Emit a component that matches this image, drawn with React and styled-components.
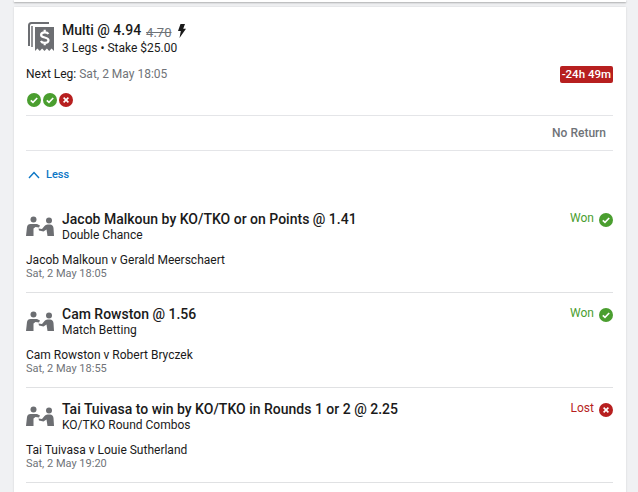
import React from 'react'
import styled, { createGlobalStyle } from 'styled-components'

const Global = createGlobalStyle`
  html, body { margin: 0; padding: 0; background: #f0f1f3; }
  body { font-family: Roboto, "Liberation Sans", sans-serif; color: #1a1a1a; }
`

const Page = styled.div`
  width: 638px;
  height: 492px;
  overflow: hidden;
  box-sizing: border-box;
`

const PrevCard = styled.div`
  margin: 0 12px 0 14px;
  height: 2px;
  background: #fff;
  box-shadow: 0 1px 2px rgba(0, 0, 0, 0.3);
`

const Card = styled.div`
  margin: 5px 12px 0 14px;
  background: #fff;
  padding: 15px 13px 30px 12px;
  box-shadow: 0 0 2px rgba(0, 0, 0, 0.12);
`

const Header = styled.div`
  display: flex;
  gap: 8px;
  padding-left: 2px;
`

const TitleRow = styled.div`
  display: flex;
  align-items: center;
  height: 17px;
`

const Title = styled.div`
  font-size: 14px;
  line-height: 17px;
  font-weight: 500;
`

const OldPrice = styled.span`
  font-size: 13px;
  color: #6f7378;
  text-decoration: line-through;
  margin: 3px 6px 0 5px;
`

const Sub = styled.div`
  font-size: 12px;
  line-height: 15px;
  margin-top: ${p => p.$top || 0}px;
`

const NextRow = styled.div`
  display: flex;
  justify-content: space-between;
  align-items: center;
  margin-top: 10px;
  height: 15px;
  font-size: 12px;
`

const Muted = styled.span`
  color: #6f7378;
`

const Countdown = styled.span`
  background: #b71f1f;
  color: #fff;
  font-size: 11.5px;
  font-weight: 500;
  line-height: 17px;
  padding: 0 2px;
  border-radius: 2px;
  margin-top: 1px;
`

const Dots = styled.div`
  display: flex;
  gap: 2px;
  margin: 12px 0 0 1px;
  height: 15px;
`

const ReturnRow = styled.div`
  border-top: 1px solid #e4e5e8;
  border-bottom: 1px solid #e4e5e8;
  margin-top: 7px;
  height: 34px;
  display: flex;
  align-items: center;
  justify-content: flex-end;
  padding-right: 7px;
  font-size: 12px;
  font-weight: 500;
  color: #6f7378;
`

const Toggle = styled.div`
  display: flex;
  align-items: center;
  gap: 6px;
  margin: 16px 0 0 2px;
  height: 15px;
  font-size: 11px;
  font-weight: 500;
  color: #0b76c5;
`

const Leg = styled.div`
  padding-bottom: 12px;
  border-bottom: 1px solid #e0e1e3;
  margin-top: ${p => p.$top}px;
`

const LegTop = styled.div`
  display: flex;
  gap: 8px;
`

const LegIcon = styled.span`
  display: flex;
  margin-top: 4px;
  height: 17px;
`

const LegInfo = styled.div`
  flex: 1;
`

const LegTitle = styled.div`
  font-size: 14px;
  line-height: 17px;
  font-weight: 500;
`

const Status = styled.div`
  display: flex;
  align-items: flex-start;
  gap: 5px;
  font-size: 12px;
  line-height: 15px;
  color: ${p => (p.$won ? '#4a9e2f' : '#b71f1f')};
`

const StatusIcon = styled.span`
  margin-top: 2px;
  display: flex;
`

const Match = styled.div`
  font-size: 12px;
  line-height: 14px;
  margin-top: 10px;
`

const When = styled.div`
  font-size: 11px;
  line-height: 13px;
  color: #6f7378;
`

const ResultDot = ({ won, size = 14 }) => (
  <svg width={size} height={size} viewBox="0 0 14 14">
    <circle cx="7" cy="7" r="7" fill={won ? '#4a9e2f' : '#b71f1f'} />
    {won ? (
      <path d="M3.8 7.3l2.2 2.1 4.2-4.4" fill="none" stroke="#fff" strokeWidth="1.6" />
    ) : (
      <path d="M4.6 4.6l4.8 4.8M9.4 4.6l-4.8 4.8" fill="none" stroke="#fff" strokeWidth="1.6" />
    )}
  </svg>
)

const ReceiptIcon = () => (
  <svg width="26" height="30" viewBox="0 0 26 30">
    <path d="M1 24V3.500Q1 1 3.500 1H21" fill="none" stroke="#6c6e72" strokeWidth="2" />
    <path d="M7 5h19v24l-2.400-2.400-2.400 2.400-2.300-2.400-2.400 2.400-2.400-2.400-2.300 2.400-2.400-2.400L7 29z" fill="#6c6e72" />
    <path d="M4 25V4" stroke="#6c6e72" strokeWidth="1.500" />
    <path d="M20.400 12c-.6-1.100-1.900-1.700-3.700-1.700-2.100 0-3.600 1-3.600 2.600 0 3.500 7.400 1.700 7.400 5.300 0 1.600-1.600 2.600-3.700 2.600-1.900 0-3.300-.7-3.900-1.900M16.700 7.800v2.500M16.700 20.800v2.500" fill="none" stroke="#fff" strokeWidth="2.200" />
  </svg>
)

const Bolt = () => (
  <svg width="9" height="14" viewBox="0 0 9 14">
    <path d="M3.500 0H8L6.200 4.800H9L2.500 14l1.300-7H1z" fill="#1a1a1a" />
  </svg>
)

const FightIcon = () => (
  <svg width="28" height="22" viewBox="0 0 28 22">
    <circle cx="7.500" cy="4.500" r="3" fill="#6c6e72" />
    <circle cx="23" cy="5.500" r="3" fill="#6c6e72" />
    <path d="M0 21l1-9q.5-3 3.500-3h6.500l3 1.500-1 2-3.500-.5-2 1.500V21z" fill="#6c6e72" />
    <path d="M28 21l-.5-8q-.5-3.500-3.500-3.500h-2.500q-2 0-3 1.500l-2.500 3-3.500-.5.500 2 4.500 1 3-2 1 6.500z" fill="#6c6e72" />
  </svg>
)

const Chevron = () => (
  <svg width="12" height="8" viewBox="0 0 12 8">
    <path d="M1 7l5-5.500L11 7" fill="none" stroke="#0b76c5" strokeWidth="1.400" />
  </svg>
)

const legs = [
  { title: 'Jacob Malkoun by KO/TKO or on Points @ 1.41', market: 'Double Chance', match: 'Jacob Malkoun v Gerald Meerschaert', when: 'Sat, 2 May 18:05', won: true, top: 29 },
  { title: 'Cam Rowston @ 1.56', market: 'Match Betting', match: 'Cam Rowston v Robert Bryczek', when: 'Sat, 2 May 18:55', won: true, top: 13 },
  { title: 'Tai Tuivasa to win by KO/TKO in Rounds 1 or 2 @ 2.25', market: 'KO/TKO Round Combos', match: 'Tai Tuivasa v Louie Sutherland', when: 'Sat, 2 May 19:20', won: false, top: 13 },
]

export default function App() {
  return (
    <Page>
      <Global />
      <PrevCard />
      <Card>
        <Header>
          <ReceiptIcon />
          <div>
            <TitleRow>
              <Title>Multi @ 4.94</Title>
              <OldPrice>4.70</OldPrice>
              <Bolt />
            </TitleRow>
            <Sub $top={2}>3 Legs • Stake $25.00</Sub>
          </div>
        </Header>
        <NextRow>
          <span>Next Leg: <Muted>Sat, 2 May 18:05</Muted></span>
          <Countdown>-24h 49m</Countdown>
        </NextRow>
        <Dots>
          <ResultDot won />
          <ResultDot won />
          <ResultDot />
        </Dots>
        <ReturnRow>No Return</ReturnRow>
        <Toggle><Chevron />Less</Toggle>
        {legs.map(leg => (
          <Leg key={leg.title} $top={leg.top}>
            <LegTop>
              <LegIcon><FightIcon /></LegIcon>
              <LegInfo>
                <LegTitle>{leg.title}</LegTitle>
                <Sub>{leg.market}</Sub>
              </LegInfo>
              <Status $won={leg.won}>
                {leg.won ? 'Won' : 'Lost'}
                <StatusIcon><ResultDot won={leg.won} /></StatusIcon>
              </Status>
            </LegTop>
            <Match>{leg.match}</Match>
            <When>{leg.when}</When>
          </Leg>
        ))}
      </Card>
    </Page>
  )
}
